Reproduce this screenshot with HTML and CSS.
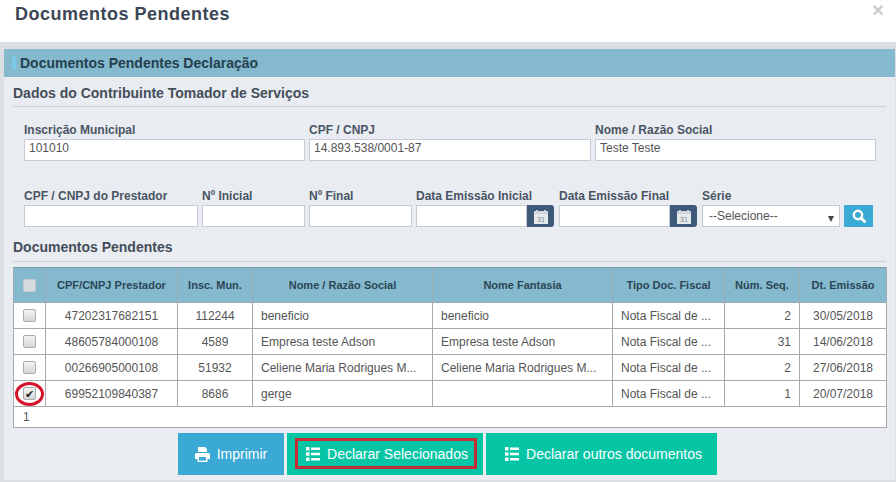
FILE: index.html
```html
<!DOCTYPE html>
<html lang="pt-BR">
<head>
  <meta charset="UTF-8">
  <title>Documentos Pendentes</title>
  <link rel="stylesheet" href="styles.css">
</head>
<body>
<div class="modal">
  <div class="modal-head">
    <h1>Documentos Pendentes</h1>
    <span class="close">&times;</span>
  </div>

  <div class="panel">
    <div class="panel-title"><i class="accent"></i>Documentos Pendentes Declaração</div>

    <div class="panel-body">
      <h2 class="section">Dados do Contribuinte Tomador de Serviços</h2>

      <div class="row-contrib">
        <label>Inscrição Municipal<input type="text" value="101010"></label>
        <label>CPF / CNPJ<input type="text" value="14.893.538/0001-87"></label>
        <label>Nome / Razão Social<input type="text" value="Teste Teste"></label>
      </div>

      <div class="row-filter">
        <label class="f-prestador">CPF / CNPJ do Prestador<input type="text"></label>
        <label class="f-num">Nº Inicial<input type="text"></label>
        <label class="f-num">Nº Final<input type="text"></label>
        <label class="f-date">Data Emissão Inicial
          <span class="date-group">
            <input type="text">
            <span class="date-btn">
              <svg width="14" height="15" viewBox="0 0 14 15"><path fill="#cfd6dc" d="M0 2h2V1h2v1h6V1h2v1h2v3H0z"/><rect y="5" width="14" height="10" fill="#e6eaea"/><text x="7" y="13" text-anchor="middle" class="cal-day">31</text></svg>
            </span>
          </span>
        </label>
        <label class="f-date">Data Emissão Final
          <span class="date-group">
            <input type="text">
            <span class="date-btn">
              <svg width="14" height="15" viewBox="0 0 14 15"><path fill="#cfd6dc" d="M0 2h2V1h2v1h6V1h2v1h2v3H0z"/><rect y="5" width="14" height="10" fill="#e6eaea"/><text x="7" y="13" text-anchor="middle" class="cal-day">31</text></svg>
            </span>
          </span>
        </label>
        <label class="f-serie">Série
          <span class="select-wrap">
            <select><option>--Selecione--</option></select>
          </span>
        </label>
        <button class="btn-search" type="button">
          <svg width="14" height="14" viewBox="0 0 14 14"><circle cx="6" cy="6" r="4.2" fill="none" stroke="#fff" stroke-width="2.4"/><path d="M9 9l3.6 3.6" stroke="#fff" stroke-width="2.8" stroke-linecap="round"/></svg>
        </button>
      </div>

      <h2 class="section section-docs">Documentos Pendentes</h2>

      <table class="docs">
        <colgroup>
          <col class="c-check"><col class="c-cpf"><col class="c-insc"><col class="c-nome">
          <col class="c-fant"><col class="c-tipo"><col class="c-seq"><col class="c-data">
        </colgroup>
        <thead>
          <tr>
            <th><input type="checkbox" class="check check-head"></th>
            <th>CPF/CNPJ Prestador</th>
            <th>Insc. Mun.</th>
            <th>Nome / Razão Social</th>
            <th>Nome Fantasia</th>
            <th>Tipo Doc. Fiscal</th>
            <th>Núm. Seq.</th>
            <th>Dt. Emissão</th>
          </tr>
        </thead>
        <tbody>
          <tr>
            <td class="mid"><input type="checkbox" class="check"></td>
            <td class="mid">47202317682151</td><td class="mid">112244</td>
            <td>beneficio</td><td>beneficio</td><td>Nota Fiscal de ...</td>
            <td class="num">2</td><td class="mid">30/05/2018</td>
          </tr>
          <tr>
            <td class="mid"><input type="checkbox" class="check"></td>
            <td class="mid">48605784000108</td><td class="mid">4589</td>
            <td>Empresa teste Adson</td><td>Empresa teste Adson</td><td>Nota Fiscal de ...</td>
            <td class="num">31</td><td class="mid">14/06/2018</td>
          </tr>
          <tr>
            <td class="mid"><input type="checkbox" class="check"></td>
            <td class="mid">00266905000108</td><td class="mid">51932</td>
            <td>Celiene Maria Rodrigues M...</td><td>Celiene Maria Rodrigues M...</td><td>Nota Fiscal de ...</td>
            <td class="num">2</td><td class="mid">27/06/2018</td>
          </tr>
          <tr>
            <td class="mid mark-cell"><input type="checkbox" class="check" checked><span class="ring"></span></td>
            <td class="mid">69952109840387</td><td class="mid">8686</td>
            <td>gerge</td><td></td><td>Nota Fiscal de ...</td>
            <td class="num">1</td><td class="mid">20/07/2018</td>
          </tr>
        </tbody>
        <tfoot>
          <tr><td colspan="8" class="total">1</td></tr>
        </tfoot>
      </table>

      <div class="actions">
        <button class="btn btn-print" type="button">
          <svg width="15" height="15" viewBox="0 0 15 15"><path fill="#fff" d="M3 0h7l2 2v3H3zM1.500 6h12A1.500 1.500 0 0 1 15 7.500V12h-2.500v3h-10v-3H0V7.500A1.500 1.500 0 0 1 1.500 6z"/><rect x="4" y="10" width="7" height="3.600" fill="#3aa9d4"/></svg>
          Imprimir
        </button>
        <button class="btn btn-declare btn-selected" type="button">
          <svg width="14" height="14" viewBox="0 0 14 14"><path fill="#fff" d="M0 0h3.500v3.500H0zM0 5.200h3.500v3.500H0zM0 10.400h3.500v3.500H0zM5 .5h9v2.500H5zM5 5.700h9v2.500H5zM5 10.900h9v2.500H5z"/></svg>
          Declarar Selecionados
        </button>
        <button class="btn btn-declare btn-others" type="button">
          <svg width="14" height="14" viewBox="0 0 14 14"><path fill="#fff" d="M0 0h3.500v3.500H0zM0 5.200h3.500v3.500H0zM0 10.400h3.500v3.500H0zM5 .5h9v2.500H5zM5 5.700h9v2.500H5zM5 10.900h9v2.500H5z"/></svg>
          Declarar outros documentos
        </button>
      </div>
    </div>
  </div>
</div>
</body>
</html>
```

FILE: styles.css
```css
* {
  box-sizing: border-box;
  margin: 0;
  padding: 0;
}

html, body {
  width: 896px;
  height: 482px;
  overflow: hidden;
}

body {
  font-family: "Liberation Sans", Arial, sans-serif;
  font-size: 12px;
  color: #555;
  background-color: #dcdfe3;
}

.modal-head {
  display: flex;
  justify-content: space-between;
  height: 42px;
  padding: 2px 12px 0 15px;
  background-color: #fff;
}

.modal-head h1 {
  font-size: 18px;
  line-height: 24px;
  letter-spacing: .5px;
  color: #3b4656;
}

.close {
  font-size: 20px;
  font-weight: bold;
  line-height: 16px;
  color: #ccc;
}

.panel {
  margin: 7px 1px 0 4px;
  height: 431px;
  background-color: #e9ecf1;
}

.panel-title {
  display: flex;
  align-items: center;
  height: 28px;
  padding-left: 8px;
  font-size: 14px;
  font-weight: bold;
  color: #24404f;
  background-color: #85b9cd;
}

.accent {
  width: 4px;
  height: 14px;
  margin-right: 4px;
  background-color: #7cc8e6;
}

.panel-body {
  padding: 0 9px;
}

.section {
  height: 30px;
  padding-top: 7px;
  font-size: 14px;
  line-height: 18px;
  color: #444e5b;
  border-bottom: 1px solid #ccd2da;
}

.section-docs {
  margin-top: 11px;
  height: 24px;
  padding-top: 0;
}

label {
  display: block;
  font-weight: bold;
  line-height: 14px;
  color: #4a5565;
}

input[type="text"],
select {
  display: block;
  width: 100%;
  height: 22px;
  margin-top: 2px;
  padding: 0 4px;
  font-family: inherit;
  font-size: 12px;
  color: #555;
  background-color: #fff;
  border: 1px solid #c5ccd6;
  border-radius: 0;
  outline: none;
}

.row-contrib {
  display: grid;
  grid-template-columns: 281px 282px 281px;
  gap: 4px;
  margin: 16px 0 0 11px;
  width: 852px;
}

.row-contrib input {
  padding-bottom: 5px;
}

.row-filter {
  display: flex;
  align-items: flex-end;
  gap: 4px;
  margin: 28px 0 0 11px;
}

.f-prestador { width: 174px; }
.f-num { width: 103px; }
.f-date { width: 138px; margin-right: 1px; }
.f-serie { width: 138px; }

.date-group {
  display: flex;
}

.date-group input {
  flex: 1;
  min-width: 0;
}

.date-btn {
  display: flex;
  align-items: center;
  justify-content: center;
  flex: none;
  width: 27px;
  height: 22px;
  margin-top: 2px;
  background-color: #3e5a7a;
  border-radius: 0 3px 3px 0;
}

.cal-day {
  font-size: 7px;
  font-weight: normal;
  fill: #7a858c;
}

.select-wrap {
  display: block;
  position: relative;
}

.select-wrap select {
  appearance: none;
  padding-left: 6px;
}

.select-wrap::after {
  content: "";
  position: absolute;
  top: 11px;
  right: 6px;
  border-top: 6px solid #444;
  border-left: 3px solid transparent;
  border-right: 3px solid transparent;
}

.btn-search {
  display: flex;
  align-items: center;
  justify-content: center;
  width: 29px;
  height: 22px;
  border: 0;
  background-color: #3aa9d4;
}

.docs {
  width: 873px;
  margin-top: 5px;
  table-layout: fixed;
  border-collapse: collapse;
  background-color: #fff;
}

.c-check { width: 32px; }
.c-cpf { width: 132px; }
.c-insc { width: 75px; }
.c-nome { width: 180px; }
.c-fant { width: 180px; }
.c-tipo { width: 112px; }
.c-seq { width: 75px; }
.c-data { width: 87px; }

.docs th {
  height: 35px;
  font-size: 11px;
  text-align: center;
  color: #2c4656;
  background-color: #85b9cd;
  border: 1px solid #9bacb5;
  border-top-color: #7f9aa8;
}

.docs td {
  height: 26px;
  padding: 0 8px;
  color: #555;
  white-space: nowrap;
  border: 1px solid #a9a9a9;
}

.docs .mid {
  text-align: center;
}

.docs .num {
  text-align: right;
}

.docs .total {
  height: 21px;
  padding: 0 0 0 9px;
}

.check {
  display: block;
  position: relative;
  appearance: none;
  width: 13px;
  height: 13px;
  margin: 0 auto;
  background: linear-gradient(#f4f4f4, #d4d6d8);
  border: 1px solid #a8acb0;
  border-radius: 2px;
}

.check-head {
  background: #d8dcde;
  border-color: #c4cace;
}

.check:checked::before {
  content: "\2714";
  position: absolute;
  top: -1px;
  left: 1px;
  font-size: 11px;
  line-height: 14px;
  color: #222;
}

.mark-cell {
  position: relative;
}

/* red ring drawn over the ticked checkbox */
.ring {
  position: absolute;
  top: 1px;
  left: 1px;
  width: 29px;
  height: 24px;
  border: 3px solid #d5142c;
  border-radius: 50%;
}

.actions {
  display: flex;
  justify-content: flex-start;
  gap: 3px;
  margin: 5px 0 0 165px;
}

.btn {
  display: flex;
  align-items: center;
  justify-content: center;
  gap: 7px;
  height: 42px;
  font-family: inherit;
  font-size: 14px;
  color: #fff;
  border: 0;
}

.btn-print {
  width: 106px;
  background-color: #3aa9d4;
}

.btn-declare {
  padding-left: 4px;
  background-color: #06c5a5;
}

.btn-selected {
  position: relative;
  width: 196px;
}

/* red highlight box around the button content */
.btn-selected::after {
  content: "";
  position: absolute;
  top: 5px;
  left: 8px;
  width: 176px;
  height: 25px;
  border: 3px solid #c62d36;
}

.btn-others {
  width: 231px;
}
```
